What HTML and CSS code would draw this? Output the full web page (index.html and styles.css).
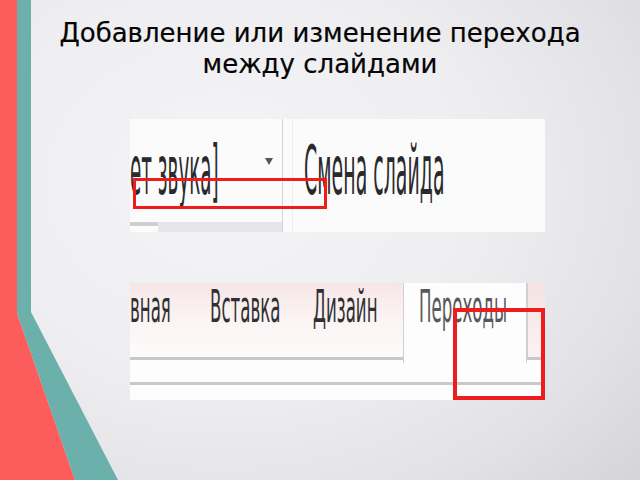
FILE: index.html
```html
<!DOCTYPE html>
<html lang="ru">
<head>
<meta charset="utf-8">
<title>Переходы</title>
<link rel="stylesheet" href="styles.css">
</head>
<body>
<div class="slide">
  <svg class="deco" width="120" height="480" viewBox="0 0 120 480">
    <polygon points="0,0 17,0 17,313 75,480 0,480" fill="#fd5c5c"/>
    <polygon points="17,0 31,0 31,312 118,480 75,480 17,313" fill="#6bb0aa"/>
  </svg>
  <h1 class="title">Добавление или изменение перехода<br>между слайдами</h1>
  <div class="shots">
    <div class="shot shot-a">
      <div class="sound">
        <div class="sound-row">
          <span class="cond big sound-text">ет звука]</span>
          <span class="tri"></span>
        </div>
        <div class="sound-bar"><span class="bar1"></span><span class="bar2"></span></div>
      </div>
      <div class="sep"></div>
      <div class="change"><span class="cond big change-text">Смена слайда</span></div>
      <div class="mark mark-a"></div>
    </div>
    <div class="shot shot-b">
      <div class="tabs">
        <div class="tab t1"><span class="cond tabtext">вная</span></div>
        <div class="tab t2"><span class="cond tabtext">Вставка</span></div>
        <div class="tab t3"><span class="cond tabtext">Дизайн</span></div>
        <div class="tab active"><span class="cond tabtext">Переходы</span></div>
        <div class="tab next"></div>
      </div>
      <div class="ribbon"><div class="ribbon-line"></div></div>
      <div class="mark mark-b"></div>
    </div>
  </div>
</div>
</body>
</html>
```

FILE: styles.css
```css
html, body {
  margin: 0;
  padding: 0;
}
body {
  width: 640px;
  height: 480px;
  overflow: hidden;
}
.slide {
  position: relative;
  width: 640px;
  height: 480px;
  background: radial-gradient(ellipse 90% 95% at 35% 38%, #f4f4f6 0%, #eeeef1 45%, #e2e2e6 75%, #d2d2d7 100%);
  font-family: "DejaVu Sans", sans-serif;
  overflow: hidden;
}
.deco {
  position: absolute;
  left: 0;
  top: 0;
}
.title {
  margin: 0;
  padding-top: 18px;
  text-align: center;
  font-weight: normal;
  font-size: 26px;
  line-height: 31px;
  color: #050505;
  -webkit-text-stroke: 0.2px #050505;
}
.shots {
  display: flex;
  flex-direction: column;
  margin-left: 130px;
  width: 415px;
  margin-top: 39px;
  gap: 51px;
}
.shot {
  position: relative;
  background: #fbfbfc;
}
.cond {
  display: inline-block;
  font-family: "DejaVu Sans", sans-serif;
  font-stretch: condensed;
  white-space: nowrap;
  transform-origin: 0 50%;
}
/* screenshot A */
.shot-a {
  height: 113px;
  display: flex;
}
.sound {
  width: 152px;
  display: flex;
  flex-direction: column;
  overflow: hidden;
}
.sound-row {
  flex: 1;
  position: relative;
  display: flex;
  align-items: flex-start;
}
.big {
  font-size: 68px;
  line-height: 68px;
  color: #2a2a2c;
}
.sound-text {
  margin-top: 18px;
  transform: scaleX(0.3);
}
.tri {
  position: absolute;
  left: 135px;
  top: 39px;
  width: 0;
  height: 0;
  border-left: 4px solid transparent;
  border-right: 4px solid transparent;
  border-top: 7px solid #555;
}
.sound-bar {
  height: 10px;
  display: flex;
}
.bar1 {
  width: 28px;
  height: 4px;
  background: #cfcfd2;
}
.bar2 {
  flex: 1;
  background: #e6e6e8;
}
.sep {
  width: 10px;
  border-left: 1px solid #d4d4d6;
  box-shadow: inset -1px 0 0 #eeeef0;
  margin-right: 11px;
}
.change {
  flex: 1;
  overflow: hidden;
}
.change-text {
  margin-top: 18px;
  transform: scaleX(0.31);
}
.mark {
  position: absolute;
  border: 3px solid #ee1c1c;
  box-sizing: border-box;
}
.mark-a {
  left: 3px;
  top: 59px;
  width: 194px;
  height: 31px;
}
/* screenshot B */
.shot-b {
  height: 117px;
  background: #fdfdfd;
}
.tabs {
  height: 77px;
  display: flex;
  background: linear-gradient(#f6e6e6, #fbf4f4 50%, #fdfbfb);
  border-bottom: 3px solid #c8c8ca;
  box-sizing: border-box;
}
.tab {
  height: 100%;
  box-sizing: border-box;
  flex: none;
}
.tabtext {
  font-size: 44px;
  line-height: 44px;
  margin-top: 2px;
  color: #303032;
  transform: scaleX(0.42);
}
.t1 { width: 63px; }
.t2 { width: 107px; padding-left: 17px; }
.t3 { width: 103px; padding-left: 13px; }
.active {
  width: 124px;
  padding-left: 15px;
  background: #fdfdfd;
  border-left: 1px solid #d0d0d2;
  border-right: 1px solid #d0d0d2;
  height: 80px;
  margin-bottom: -3px;
  position: relative;
}
.active .tabtext {
  color: #58585a;
}
.next {
  width: 18px;
  border-left: 1px solid #cfcfd1;
  background: linear-gradient(#f6e2e2, #fbf2f2);
  position: relative;
}
.ribbon {
  height: 40px;
  padding-top: 22px;
  box-sizing: border-box;
}
.ribbon-line {
  height: 3px;
  background: #c9c9cb;
}
.mark-b {
  left: 323px;
  top: 25px;
  width: 92px;
  height: 92px;
  border-width: 4px;
}
```
